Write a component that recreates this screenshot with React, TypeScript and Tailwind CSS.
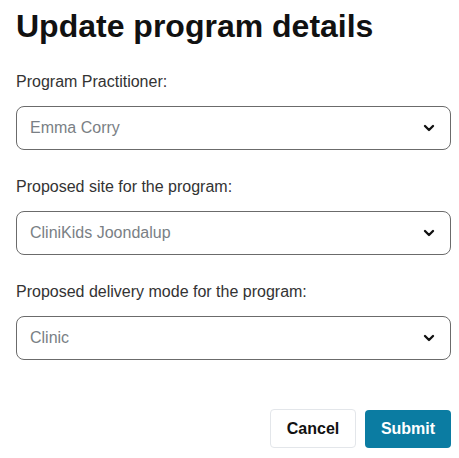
import { ChevronDown } from "lucide-react";

const fields = [
  { label: "Program Practitioner:", value: "Emma Corry" },
  { label: "Proposed site for the program:", value: "CliniKids Joondalup" },
  { label: "Proposed delivery mode for the program:", value: "Clinic" },
];

function SelectField({ label, value }: { label: string; value: string }) {
  return (
    <div className="flex flex-col">
      <label className="text-[16px] leading-[18px] text-[#333]">{label}</label>
      <div className="mt-[15px] h-[44px] flex items-center justify-between rounded-lg border border-[#6b6b6b] pl-[13px] pr-[13px]">
        <span className="text-[16px] text-[#7a7f85]">{value}</span>
        <ChevronDown className="w-4 h-4 text-[#111]" strokeWidth={3.5} />
      </div>
    </div>
  );
}

export default function App() {
  return (
    <div
      className="w-[459px] h-[458px] bg-white pl-4 pt-[6px]"
      style={{ fontFamily: '"Liberation Sans", Arial, sans-serif' }}
    >
      <div className="w-[435px] flex flex-col">
        <h1 className="text-[32px] leading-[40px] font-bold text-[#111]">
          Update program details
        </h1>
        <div className="mt-[27px] flex flex-col gap-[28px]">
          {fields.map((f) => (
            <SelectField key={f.label} label={f.label} value={f.value} />
          ))}
        </div>
        <div className="mt-[49px] flex justify-end items-end gap-[9px]">
          <button
            type="button"
            className="w-[86px] h-[39px] rounded border border-[#e3e6ea] bg-white text-[16px] font-bold text-[#111]"
          >
            Cancel
          </button>
          <button
            type="button"
            className="w-[86px] h-[38px] rounded bg-[#0b7ca2] text-[16px] font-bold text-white"
          >
            Submit
          </button>
        </div>
      </div>
    </div>
  );
}
